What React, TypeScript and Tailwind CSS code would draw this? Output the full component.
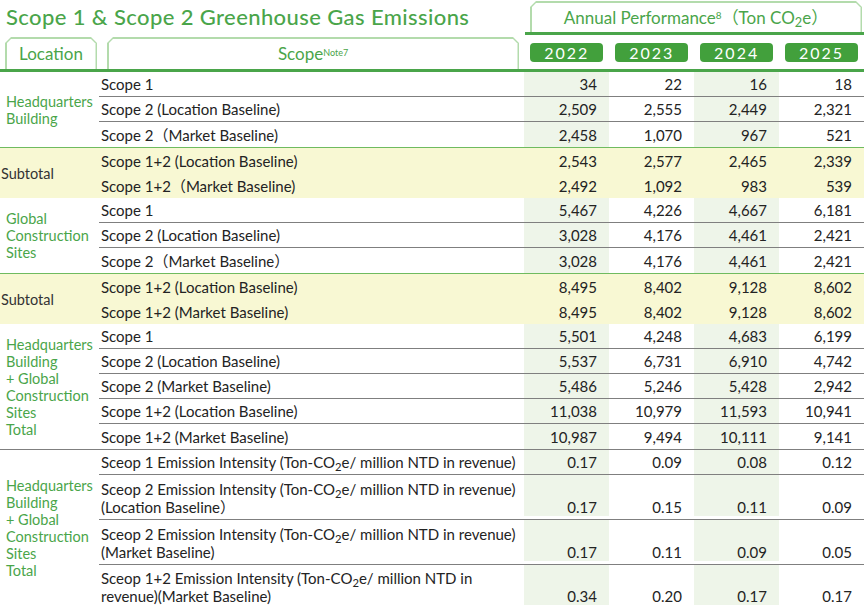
import React from "react";

type Row = { label: React.ReactNode; values: string[]; size?: "one" | "two" | "last" };
type Group = {
  location: React.ReactNode;
  subtotal?: boolean;
  top: "none" | "green" | "grey";
  rows: Row[];
};

const CO2 = (
  <>
    CO<sub>2</sub>
  </>
);

const totalLabel = (
  <>
    Headquarters
    <br />
    Building
    <br />+ Global
    <br />
    Construction
    <br />
    Sites
    <br />
    Total
  </>
);

const groups: Group[] = [
  {
    location: (
      <>
        Headquarters
        <br />
        Building
      </>
    ),
    top: "none",
    rows: [
      { label: "Scope 1", values: ["34", "22", "16", "18"] },
      { label: "Scope 2 (Location Baseline)", values: ["2,509", "2,555", "2,449", "2,321"] },
      { label: "Scope 2（Market Baseline)", values: ["2,458", "1,070", "967", "521"] },
    ],
  },
  {
    location: "Subtotal",
    subtotal: true,
    top: "green",
    rows: [
      { label: "Scope 1+2 (Location Baseline)", values: ["2,543", "2,577", "2,465", "2,339"] },
      { label: "Scope 1+2（Market Baseline)", values: ["2,492", "1,092", "983", "539"] },
    ],
  },
  {
    location: (
      <>
        Global
        <br />
        Construction
        <br />
        Sites
      </>
    ),
    top: "none",
    rows: [
      { label: "Scope 1", values: ["5,467", "4,226", "4,667", "6,181"] },
      { label: "Scope 2 (Location Baseline)", values: ["3,028", "4,176", "4,461", "2,421"] },
      { label: "Scope 2（Market Baseline）", values: ["3,028", "4,176", "4,461", "2,421"] },
    ],
  },
  {
    location: "Subtotal",
    subtotal: true,
    top: "green",
    rows: [
      { label: "Scope 1+2 (Location Baseline)", values: ["8,495", "8,402", "9,128", "8,602"] },
      { label: "Scope 1+2 (Market Baseline)", values: ["8,495", "8,402", "9,128", "8,602"] },
    ],
  },
  {
    location: totalLabel,
    top: "none",
    rows: [
      { label: "Scope 1", values: ["5,501", "4,248", "4,683", "6,199"] },
      { label: "Scope 2 (Location Baseline)", values: ["5,537", "6,731", "6,910", "4,742"] },
      { label: "Scope 2 (Market Baseline)", values: ["5,486", "5,246", "5,428", "2,942"] },
      { label: "Scope 1+2 (Location Baseline)", values: ["11,038", "10,979", "11,593", "10,941"] },
      { label: "Scope 1+2 (Market Baseline)", values: ["10,987", "9,494", "10,111", "9,141"] },
    ],
  },
  {
    location: totalLabel,
    top: "grey",
    rows: [
      {
        label: <>Sceop 1 Emission Intensity (Ton-{CO2}e/ million NTD in revenue)</>,
        values: ["0.17", "0.09", "0.08", "0.12"],
      },
      {
        label: (
          <>
            Sceop 2 Emission Intensity (Ton-{CO2}e/ million NTD in revenue)
            <br />
            (Location Baseline）
          </>
        ),
        values: ["0.17", "0.15", "0.11", "0.09"],
        size: "two",
      },
      {
        label: (
          <>
            Sceop 2 Emission Intensity (Ton-{CO2}e/ million NTD in revenue)
            <br />
            (Market Baseline)
          </>
        ),
        values: ["0.17", "0.11", "0.09", "0.05"],
        size: "two",
      },
      {
        label: (
          <>
            Sceop 1+2 Emission Intensity (Ton-{CO2}e/ million NTD in
            <br />
            revenue)(Market Baseline)
          </>
        ),
        values: ["0.34", "0.20", "0.17", "0.17"],
        size: "last",
      },
    ],
  },
];

const years = ["2022", "2023", "2024", "2025"];

function Tab({ className, children }: { className: string; children: React.ReactNode }) {
  return (
    <div
      className={`bg-[#b3dbac] px-[1.5px] pt-[1.5px] [clip-path:polygon(6px_0,calc(100%_-_6px)_0,100%_6px,100%_100%,0_100%,0_6px)] ${className}`}
    >
      <div className="flex h-full items-center justify-center bg-white text-[17px] text-[#4aa54a] [clip-path:polygon(5px_0,calc(100%_-_5px)_0,100%_5px,100%_100%,0_100%,0_5px)]">
        {children}
      </div>
    </div>
  );
}

function DataRow({ row, last, subtotal }: { row: Row; last: boolean; subtotal?: boolean }) {
  const size = row.size ?? "one";
  const height =
    size === "one"
      ? "h-[25px] items-center"
      : size === "two"
        ? "h-[45px] items-end pb-[3px]"
        : "h-[41px] items-end pb-[1px]";
  return (
    <div className={`flex ${height} ${!last && !subtotal ? "border-b border-[#7f7f7f]" : ""}`}>
      <div className="w-[425px] pl-[2px] leading-[18px]">{row.label}</div>
      {row.values.map((v, i) => (
        <div
          key={i}
          className={`flex h-full w-[85px] justify-end pr-[12px] leading-[18px] ${
            size === "one" ? "items-center" : "items-end"
          } ${!subtotal && i % 2 === 0 ? "bg-[#eef5e9]" : ""}`}
        >
          {v}
        </div>
      ))}
    </div>
  );
}

export default function App() {
  return (
    <div className="h-[606px] w-[864px] overflow-hidden bg-white font-['Lato','Noto_Sans_CJK_TC',sans-serif] text-[15px] text-[#232323]">
      {/* header */}
      <div className="flex h-[35px]">
        <div className="w-[525px] pl-[6px] pt-[4px] text-[22px] font-medium leading-[26px] tracking-[0.4px] text-[#4aa54a]">
          Scope 1 &amp; Scope 2 Greenhouse Gas Emissions
        </div>
        <div className="flex flex-1 flex-col">
          <div className="flex-1 pl-[5px] pr-[2px] pt-[1px]">
            <Tab className="h-full">
              <span>
                Annual Performance<sup className="text-[10px]">8</sup>（Ton {CO2}e）
              </span>
            </Tab>
          </div>
          <div className="h-[3px] bg-[#4aa54a]" />
        </div>
      </div>
      <div className="flex h-[34px]">
        <div className="flex w-[525px] items-end">
          <Tab className="ml-[5px] h-[32px] w-[92px]">Location</Tab>
          <Tab className="ml-[10px] h-[32px] w-[412px]">
            <span>
              Scope<sup className="text-[9px]">Note7</sup>
            </span>
          </Tab>
        </div>
        {years.map((y) => (
          <div key={y} className="flex w-[85px] justify-center pt-[8px]">
            <div className="h-[19px] w-[73px] rounded-[4px] bg-[#42a03c] text-center text-[16px] leading-[19px] tracking-[2px] text-white">
              {y}
            </div>
          </div>
        ))}
      </div>
      <div className="h-[3px] bg-[#4aa54a]" />

      {/* body */}
      {groups.map((g, gi) => (
        <div
          key={gi}
          className={`flex ${g.subtotal ? "bg-[#f8f8d3]" : ""} ${
            g.top === "green" ? "border-t border-[#6fbb5f]" : g.top === "grey" ? "border-t border-[#7f7f7f]" : ""
          }`}
        >
          <div
            className={`flex w-[100px] items-center text-[14.5px] leading-[17px] ${
              g.subtotal ? "pl-[1px] text-[#333]" : "pl-[6px] text-[#4aa54a]"
            }`}
          >
            <div>{g.location}</div>
          </div>
          <div className="flex flex-1 flex-col">
            {g.rows.map((r, ri) => (
              <DataRow key={ri} row={r} last={ri === g.rows.length - 1} subtotal={g.subtotal} />
            ))}
          </div>
        </div>
      ))}
      <div className="h-[1px] bg-[#d8d8d8]" />
    </div>
  );
}
